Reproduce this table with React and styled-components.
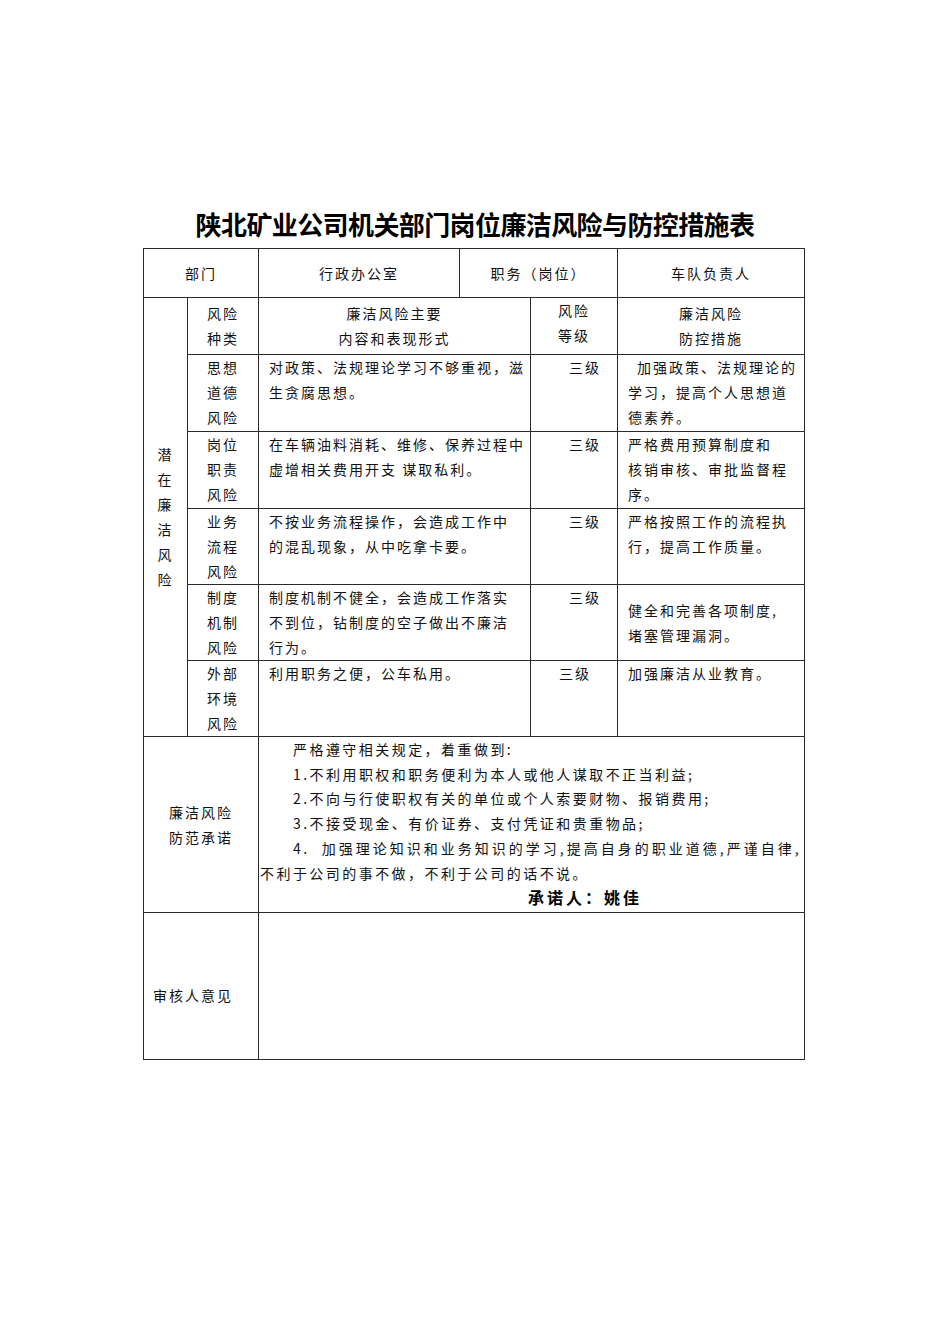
import React from "react";
import styled, { createGlobalStyle } from "styled-components";

const Global = createGlobalStyle`
  html, body { margin: 0; padding: 0; background: #ffffff; }
  body { font-family: "Noto Sans CJK SC", "Noto Sans", sans-serif; color: #111; }
`;

const Page = styled.div`
  width: 950px;
  min-height: 1344px;
  padding-top: 208px;
  box-sizing: border-box;
`;

const Title = styled.h1`
  margin: 0 0 8px 0;
  text-align: center;
  font-size: 26px;
  line-height: 32px;
  font-weight: 700;
  letter-spacing: -0.6px;
  color: #000;
`;

const Table = styled.table`
  margin-left: 143px;
  width: 662px;
  border-collapse: collapse;
  table-layout: fixed;
  font-size: 14px;
  letter-spacing: 2px;
  color: #111;
`;

const Row = styled.tr`
  height: ${(p) => p.$h}px;
`;

const Cell = styled.td`
  border: 1px solid #2a2a2a;
  padding: ${(p) => p.$pt || 0}px 0 0 ${(p) => p.$pl || 0}px;
  text-align: ${(p) => p.$align || "left"};
  vertical-align: ${(p) => p.$valign || "top"};
  line-height: 25px;
  white-space: nowrap;
  overflow: hidden;
`;

const Line = styled.div`
  padding-left: ${(p) => p.$indent || 0}px;
`;

const Stack = styled.div`
  display: flex;
  flex-direction: column;
  align-items: center;
  line-height: 25px;
`;

const Promise = styled.div`
  font-size: 14px;
  line-height: 24.7px;
  letter-spacing: 2.45px;
  padding-top: 0;
`;

const PLine = styled.div`
  padding-left: ${(p) => (p.$indent ? 33 : 0)}px;
  text-align: ${(p) => (p.$justify ? "justify" : "left")};
  text-align-last: ${(p) => (p.$justify ? "justify" : "auto")};
  padding-right: ${(p) => (p.$justify ? 3 : 0)}px;
  white-space: ${(p) => (p.$justify ? "normal" : "nowrap")};
`;

const Signer = styled.div`
  padding-left: 268px;
  font-size: 16px;
  font-weight: 700;
  letter-spacing: 3px;
  line-height: 24.7px;
  color: #000;
`;

const rows = [
  {
    type: ["思想", "道德", "风险"],
    content: ["对政策、法规理论学习不够重视，滋", "生贪腐思想。"],
    grade: 38,
    measure: [["加强政策、法规理论的", 9], ["学习，提高个人思想道", 0], ["德素养。", 0]],
    h: 77,
  },
  {
    type: ["岗位", "职责", "风险"],
    content: ["在车辆油料消耗、维修、保养过程中", "虚增相关费用开支 谋取私利。"],
    grade: 38,
    measure: [["严格费用预算制度和", 0], ["核销审核、审批监督程", 0], ["序。", 0]],
    h: 77,
  },
  {
    type: ["业务", "流程", "风险"],
    content: ["不按业务流程操作，会造成工作中", "的混乱现象，从中吃拿卡要。"],
    grade: 38,
    measure: [["严格按照工作的流程执", 0], ["行，提高工作质量。", 0]],
    h: 76,
  },
  {
    type: ["制度", "机制", "风险"],
    content: ["制度机制不健全，会造成工作落实", "不到位，钻制度的空子做出不廉洁", "行为。"],
    grade: 38,
    measure: [["健全和完善各项制度,", 0], ["堵塞管理漏洞。", 0]],
    measureMiddle: true,
    h: 76,
  },
  {
    type: ["外部", "环境", "风险"],
    content: ["利用职务之便，公车私用。"],
    grade: 28,
    measure: [["加强廉洁从业教育。", 0]],
    h: 76,
  },
];

export default function App() {
  return (
    <Page>
      <Global />
      <Title>陕北矿业公司机关部门岗位廉洁风险与防控措施表</Title>
      <Table>
        <colgroup>
          <col style={{ width: 44 }} />
          <col style={{ width: 71 }} />
          <col style={{ width: 201 }} />
          <col style={{ width: 71 }} />
          <col style={{ width: 87 }} />
          <col style={{ width: 187 }} />
        </colgroup>
        <tbody>
          <Row $h={49}>
            <Cell colSpan={2} $align="center" $valign="middle">部门</Cell>
            <Cell $align="center" $valign="middle">行政办公室</Cell>
            <Cell colSpan={2} $align="center" $valign="middle">职务（岗位）</Cell>
            <Cell $align="center" $valign="middle">车队负责人</Cell>
          </Row>
          <Row $h={57}>
            <Cell rowSpan={6} $align="center" $valign="middle">
              <Stack>
                {["潜", "在", "廉", "洁", "风", "险"].map((c) => (
                  <span key={c}>{c}</span>
                ))}
              </Stack>
            </Cell>
            <Cell $align="center" $pt={3}>
              <Line>风险</Line>
              <Line>种类</Line>
            </Cell>
            <Cell colSpan={2} $align="center" $pt={3}>
              <Line>廉洁风险主要</Line>
              <Line>内容和表现形式</Line>
            </Cell>
            <Cell $align="center" $pt={0}>
              <Line>风险</Line>
              <Line>等级</Line>
            </Cell>
            <Cell $align="center" $pt={3}>
              <Line>廉洁风险</Line>
              <Line>防控措施</Line>
            </Cell>
          </Row>
          {rows.map((r, i) => (
            <Row key={i} $h={r.h}>
              <Cell $align="center">
                {r.type.map((t) => (
                  <Line key={t}>{t}</Line>
                ))}
              </Cell>
              <Cell colSpan={2} $pl={10}>
                {r.content.map((t) => (
                  <Line key={t}>{t}</Line>
                ))}
              </Cell>
              <Cell $pl={r.grade}>三级</Cell>
              <Cell $pl={10} $valign={r.measureMiddle ? "middle" : "top"}>
                {r.measure.map(([t, ind]) => (
                  <Line key={t} $indent={ind}>{t}</Line>
                ))}
              </Cell>
            </Row>
          ))}
          <Row $h={176}>
            <Cell colSpan={2} $align="center" $valign="middle">
              <Line>廉洁风险</Line>
              <Line>防范承诺</Line>
            </Cell>
            <Cell colSpan={4} $pl={1}>
              <Promise>
                <PLine $indent>严格遵守相关规定，着重做到:</PLine>
                <PLine $indent>1.不利用职权和职务便利为本人或他人谋取不正当利益;</PLine>
                <PLine $indent>2.不向与行使职权有关的单位或个人索要财物、报销费用;</PLine>
                <PLine $indent>3.不接受现金、有价证券、支付凭证和贵重物品;</PLine>
                <PLine $indent $justify>4.&nbsp;&nbsp;加强理论知识和业务知识的学习,提高自身的职业道德,严谨自律,</PLine>
                <PLine>不利于公司的事不做，不利于公司的话不说。</PLine>
                <Signer>承诺人：姚佳</Signer>
              </Promise>
            </Cell>
          </Row>
          <Row $h={147}>
            <Cell colSpan={2} $pl={9} $pt={19} $valign="middle">审核人意见</Cell>
            <Cell colSpan={4} />
          </Row>
        </tbody>
      </Table>
    </Page>
  );
}
